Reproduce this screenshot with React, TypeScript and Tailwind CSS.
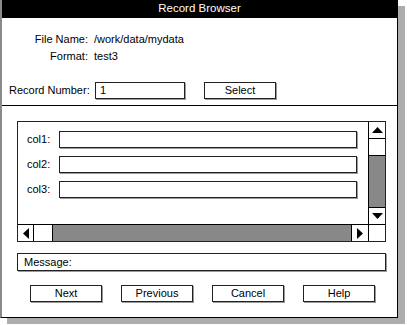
import React from 'react';

const Box: React.FC<{ className?: string; children?: React.ReactNode }> = ({ className = '', children }) => (
  <div className={`border border-[#222] shadow-[1px_1px_0_#9a9a9a] bg-white ${className}`}>{children}</div>
);

const Btn: React.FC<{ label: string }> = ({ label }) => (
  <div className="w-[72px] h-[17px] border border-[#222] shadow-[1px_1px_0_#9a9a9a] flex items-center justify-center leading-none">
    {label}
  </div>
);

const Tri: React.FC<{ dir: 'up' | 'down' | 'left' | 'right' }> = ({ dir }) => {
  const pts = {
    up: '0,6 11,6 5.5,0',
    down: '0,0 11,0 5.5,6',
    left: '6,0 6,11 0,5.5',
    right: '0,0 0,11 6,5.5',
  }[dir];
  const v = dir === 'up' || dir === 'down';
  return (
    <svg width={v ? 11 : 6} height={v ? 6 : 11} viewBox={v ? '0 0 11 6' : '0 0 6 11'}>
      <polygon points={pts} fill="#000" />
    </svg>
  );
};

export default function App() {
  const cols = ['col1:', 'col2:', 'col3:'];

  return (
    <div className="w-[407px] h-[325px] bg-white text-[11px] text-black font-['Liberation_Sans',Arial,sans-serif]">
      <div className="w-[398px] h-[318px] flex flex-col border-l-2 border-l-[#8a8a8a] border-r border-b border-black shadow-[7px_6px_0_#adadad] bg-white">
        {/* title */}
        <div className="h-[18px] bg-black text-white text-[11.5px] flex items-center justify-center">Record Browser</div>

        {/* file info */}
        <div className="h-[87px] flex flex-col">
          <div className="mt-[15px] flex flex-col gap-[4px]">
            <div className="flex h-[13px] items-center">
              <span className="w-[86px] text-right">File Name:</span>
              <span className="ml-[6px]">/work/data/mydata</span>
            </div>
            <div className="flex h-[13px] items-center">
              <span className="w-[86px] text-right">Format:</span>
              <span className="ml-[6px]">test3</span>
            </div>
          </div>
          <div className="mt-[19px] flex items-center h-[17px]">
            <span className="ml-[7px] w-[86px]">Record Number:</span>
            <Box className="w-[90px] h-[17px] flex items-center pl-[4px]">1</Box>
            <div className="ml-[19px]">
              <Btn label="Select" />
            </div>
          </div>
        </div>

        <div className="border-t border-black" />

        {/* scroll panel */}
        <div className="mt-[15px] ml-[15px] w-[369px] h-[121px] border border-[#222] grid grid-cols-[1fr_17px] grid-rows-[1fr_17px]">
          <div className="flex flex-col gap-[8px] pt-[9px] pl-[9px]">
            {cols.map(c => (
              <div key={c} className="flex items-center h-[17px]">
                <span className="w-[32px]">{c}</span>
                <Box className="w-[298px] h-[17px]" />
              </div>
            ))}
          </div>
          <div className="border-l border-black flex flex-col">
            <div className="h-[17px] border-b border-black flex items-center justify-center">
              <Tri dir="up" />
            </div>
            <div className="h-[16px]" />
            <div className="flex-1 bg-[#888] border-t border-b border-black" />
            <div className="h-[16px] flex items-center justify-center">
              <Tri dir="down" />
            </div>
          </div>
          <div className="border-t border-black flex">
            <div className="w-[16px] border-r border-black flex items-center justify-center">
              <Tri dir="left" />
            </div>
            <div className="w-[18px]" />
            <div className="flex-1 bg-[#888] border-l border-r border-black" />
            <div className="w-[16px] flex items-center justify-center">
              <Tri dir="right" />
            </div>
          </div>
          <div className="border-t border-l border-black" />
        </div>

        {/* message */}
        <Box className="mt-[11px] ml-[15px] w-[369px] h-[18px] flex items-center pl-[6px]">Message:</Box>

        {/* buttons */}
        <div className="mt-[14px] ml-[28px] flex gap-[19px]">
          <Btn label="Next" />
          <Btn label="Previous" />
          <Btn label="Cancel" />
          <Btn label="Help" />
        </div>
      </div>
    </div>
  );
}
